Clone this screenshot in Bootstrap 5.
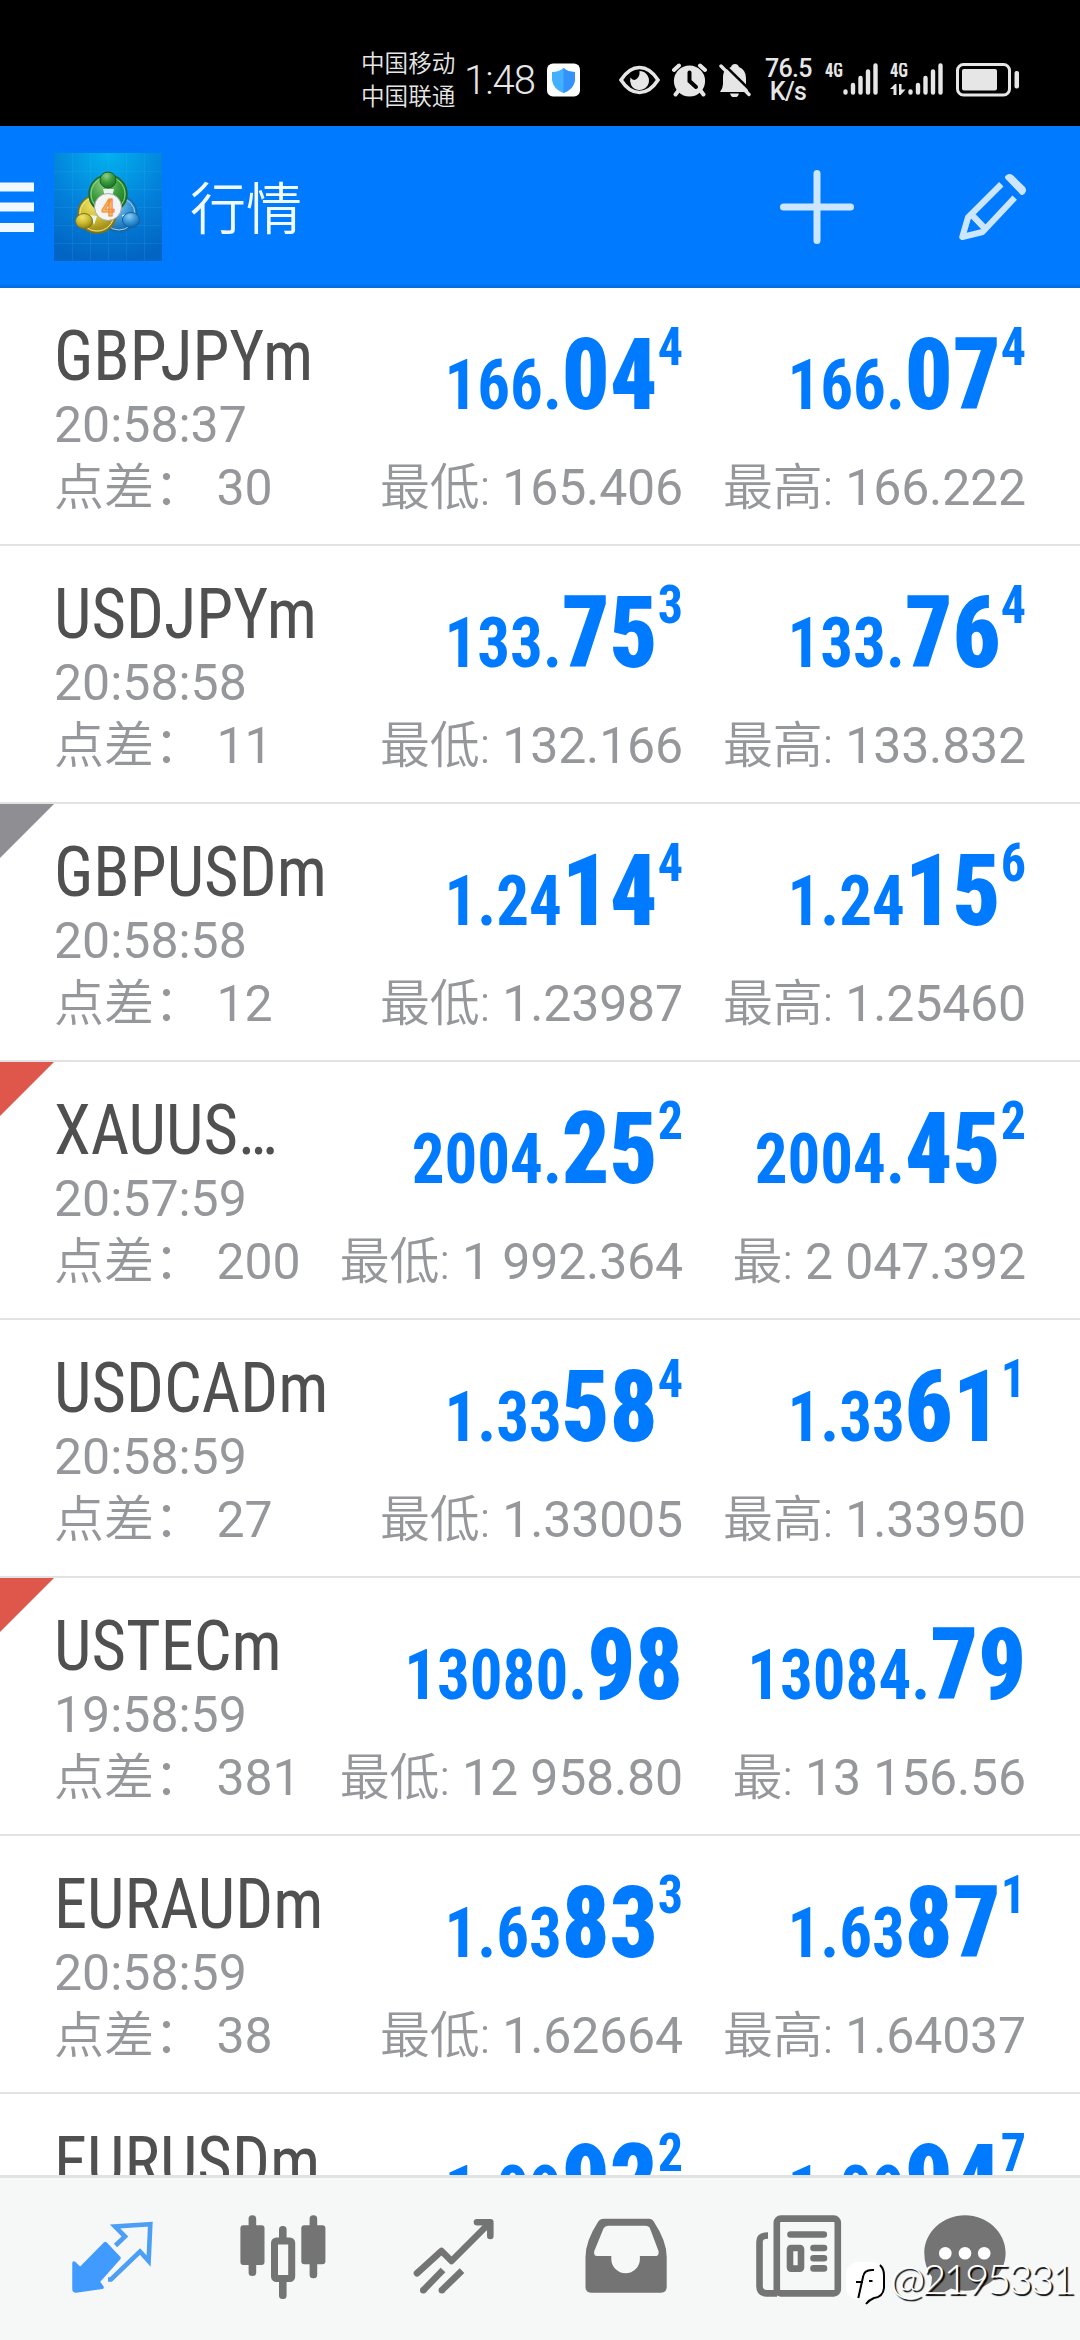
<!DOCTYPE html>
<html lang="zh-CN">
<head>
<meta charset="utf-8">
<meta name="viewport" content="width=device-width, initial-scale=1">
<title>行情</title>
<link href="https://cdn.jsdelivr.net/npm/bootstrap@5.3.0/dist/css/bootstrap.min.css" rel="stylesheet">
<style>
body{width:1080px;height:2340px;overflow:hidden;background:#fff;font-family:Roboto,"Noto Sans CJK SC",sans-serif;color:#96979b}
svg{display:block;flex:none}
.statusbar{height:126px;background:#000;color:#e6e6e6;padding:34px 0 0 361px}
.carrier{font:350 23.6px/33px "Noto Sans CJK SC",sans-serif;white-space:nowrap;width:103px;padding-top:12px}
.clock{font-size:40px;font-weight:300;letter-spacing:-1px;width:83px;line-height:80px;padding-top:7px}
.statusicons{height:91px}
.speed{font-size:25px;line-height:23px;width:46px;letter-spacing:-.7px;margin:0 14px;font-weight:500}
.gap-a{margin-left:39px}.gap-b{margin-left:12px}.gap-c{margin-left:13px}
.appbar{height:162px;background:#007aff;border-bottom:3px solid #0070e4;color:#f0f9ff;padding-top:3px}
.applogo{margin:0 28px 0 20px}
.apptitle{font:350 56px/1 "Noto Sans CJK SC",sans-serif;padding-bottom:5px}
.plus{margin-right:104px}.pencil{margin-right:53px}
.quotes{height:1887px;overflow:hidden}
.quote{position:relative;height:258px;border-bottom:2px solid #e1e2e4;padding:28px 0 0 54px;display:grid;grid-template-columns:276px 353px 343px;grid-template-rows:138px 68px;white-space:nowrap}
.sym{font-family:"Roboto Condensed",Roboto,sans-serif;font-stretch:condensed;font-size:70px;line-height:80px;color:#505050;transform:scaleX(.952);transform-origin:left}
.info{font-size:50px;line-height:58px}
.info.low{line-height:68px}
.info.text-end{letter-spacing:-.15px}
.info span{font-weight:350}
.price{font-family:"Roboto Condensed",Roboto,sans-serif;font-stretch:condensed;font-weight:700;font-size:70px;line-height:138px;color:#007aff;transform:scaleX(.928);transform-origin:right}
.price b{font-size:101px;line-height:0}
.price i{font-style:normal;font-size:54px;line-height:0;vertical-align:44px}
.flag{position:absolute;left:0;top:0;width:54px;height:54px;clip-path:polygon(0 0,100% 0,0 100%)}
.flag-gray{background:#8e8e93}.flag-red{background:#df574a}
.tabs{position:relative;height:165px;background:#f6f7f7;border-top:3px solid #e1e2e4;padding:29px 26px 0;color:#747474}
.stamp{position:absolute;left:846px;top:84px}
.stamp span{font:300 42px/42px Lato,sans-serif;color:#fff;text-shadow:2px 2px 1px #000;letter-spacing:-2.8px;margin:-11px 0 0 4px}
</style>
</head>
<body>
<header>
<div class="statusbar d-flex">
  <div class="carrier">中国移动<br>中国联通</div>
  <div class="clock">1:48</div>
  <div class="statusicons d-flex align-items-center">
    <svg width="33" height="34"><rect width="33" height="33" y=".5" rx="6" fill="#fff"/><path d="M16.500 5C20 8 24 9 28 9V17Q27 26 16.500 30Q6 26 5 17V9Q12 9 16.500 5Z" fill="#43b0ff"/><path d="M16.500 5C20 8 24 9 28 9V17Q27 26 16.500 30Z" fill="#3393fb"/></svg>
    <svg class="gap-a" width="41" height="34" fill="none" stroke="#e6e6e6" stroke-width="3.600"><path d="M2 17Q10 4.500 20.500 4.500T39 17Q31 29.500 20.500 29.500T2 17Z"/><path d="M20.500 8a9.500 9.500 0 1 1-9 6.500q2.500 4 6 1.500t3-8z" fill="#e6e6e6" stroke="none"/></svg>
    <svg class="gap-b" width="35" height="34"><g fill="none" stroke="#e6e6e6" stroke-width="4" stroke-linecap="round"><path d="M2 7L7 2.500M28 2.500L33 7M7 27L3.500 31.500M28 27L31.500 31.500"/></g><circle cx="17.500" cy="18" r="15.600" fill="#e6e6e6"/><path d="M17.500 9.500V18L24 24" stroke="#000" stroke-width="4" stroke-linecap="round" fill="none"/></svg>
    <svg class="gap-b" width="32" height="34"><path d="M16 1q3 0 4 3q7 3 7 11v7l2 5v2H1q3-4 3-8v-7q0-6 4-8q2-1 4-2q1-3 4-3zM11 30.500h9q-1 4-4.500 4t-4.500-4z" fill="#e6e6e6"/><path d="M3 -.5L33 29" stroke="#000" stroke-width="2.500"/><path d="M2 3L30 31.500" stroke="#e6e6e6" stroke-width="3.400" stroke-linecap="round"/></svg>
    <div class="speed text-center">76.5<br>K/s</div>
    <svg width="53" height="34" fill="#e6e6e6"><text x="0" y="14" font-family="Roboto Condensed,Roboto,sans-serif" font-size="20" font-weight="700" textLength="18" lengthAdjust="spacingAndGlyphs">4G</text><g stroke="#e6e6e6" stroke-width="4.400" stroke-linecap="round"><path d="M20.500 28.500v1M28 22v7.500M35.500 15v14.500M43 8.500v21M50.500 2.500v27"/></g></svg>
    <svg class="gap-b" width="53" height="34" fill="#e6e6e6"><text x="0" y="14" font-family="Roboto Condensed,Roboto,sans-serif" font-size="20" font-weight="700" textLength="18" lengthAdjust="spacingAndGlyphs">4G</text><path d="M0 26l5-5h1.500v11H3.500v-6zM9 21h2.500v5.500h4L10.500 32H9z"/><g stroke="#e6e6e6" stroke-width="4.400" stroke-linecap="round"><path d="M20.500 28.500v1M28 22v7.500M35.500 15v14.500M43 8.500v21M50.500 2.500v27"/></g></svg>
    <svg class="gap-c" width="64" height="34" fill="#e6e6e6"><rect x="1.500" y="1.500" width="52" height="30.500" rx="6" fill="none" stroke="#e6e6e6" stroke-width="3"/><rect x="6" y="6" width="35" height="21.500" rx="2"/><rect x="58.500" y="8" width="4.500" height="17.500" rx="2"/></svg>
  </div>
</div>
<div class="appbar d-flex align-items-center">
  <svg width="34" height="52" fill="#f0f9ff"><path d="M0 1.500h34v9H0zM0 21.500h34v9H0zM0 42h34v9H0z"/></svg>
  <svg class="applogo" width="108" height="108" viewBox="0 0 108 108">
    <defs>
      <radialGradient id="sky" cx=".5" cy="0" r="1"><stop offset="0" stop-color="#02b2ee"/><stop offset=".55" stop-color="#0381da"/><stop offset="1" stop-color="#0265c4"/></radialGradient>
      <radialGradient id="gr" cx=".4" cy=".25" r=".8"><stop offset="0" stop-color="#8fcf84"/><stop offset=".5" stop-color="#3a9b3d"/><stop offset="1" stop-color="#14701f"/></radialGradient>
      <radialGradient id="ye" cx=".4" cy=".25" r=".8"><stop offset="0" stop-color="#f0e56c"/><stop offset=".5" stop-color="#cdbb2f"/><stop offset="1" stop-color="#8c7a10"/></radialGradient>
      <radialGradient id="bl" cx=".4" cy=".25" r=".8"><stop offset="0" stop-color="#8accf2"/><stop offset=".5" stop-color="#3a97d6"/><stop offset="1" stop-color="#0b5ea6"/></radialGradient>
    </defs>
    <rect width="108" height="108" fill="url(#sky)"/>
    <path d="M18.500 0v108M36.500 0v108M54.500 0v108M72.500 0v108M90.500 0v108M0 18.500h108M0 36.500h108M0 54.500h108M0 72.500h108M0 90.500h108" stroke="#4cb4f0" stroke-opacity=".16"/>
    <circle cx="65" cy="61" r="18" fill="url(#bl)" stroke="#1a69a8" stroke-width="1.500"/><circle cx="65" cy="61" r="16" fill="none" stroke="#9ad4f5"/>
    <circle cx="43" cy="61" r="19" fill="url(#ye)" stroke="#7d7218" stroke-width="1.500"/><circle cx="43" cy="61" r="17" fill="none" stroke="#f5ec90"/>
    <circle cx="54" cy="41" r="19" fill="url(#gr)" stroke="#1d6a2a" stroke-width="1.500"/><circle cx="54" cy="41" r="17" fill="none" stroke="#9bdc92"/>
    <path d="M49 36h11l-2 8h-7zM36 62l7 1-3 9zM74 61l-6 1 3 9z" fill="#e9f5ef"/>
    <circle cx="54" cy="27" r="8" fill="url(#gr)" stroke="#17622a"/><ellipse cx="30" cy="68" rx="8.500" ry="7.500" fill="url(#ye)" stroke="#7d7218"/><ellipse cx="77" cy="67" rx="8.500" ry="7.500" fill="url(#bl)" stroke="#12609f"/>
    <circle cx="54" cy="54" r="13.500" fill="#f4f4f4" stroke="#a8a8a8"/>
    <text x="54" y="62.500" text-anchor="middle" font-family="Roboto,sans-serif" font-weight="700" font-size="23" fill="#ffb870" stroke="#f08a35">4</text>
  </svg>
  <div class="apptitle me-auto">行情</div>
  <svg class="plus" width="76" height="76" stroke="#cce6ff" stroke-width="7" stroke-linecap="round"><path d="M38 4.500v67M4.500 38h67"/></svg>
  <svg class="pencil" width="68" height="68" fill="none" stroke="#cce6ff" stroke-width="6.200" stroke-linejoin="round"><path d="M42.300 11.300L9 44.500L3.300 64L23.500 59L55.700 24.700M13 42L25.500 55"/><path d="M48 4.300q2-2.500 4.500-.5L64 15q2 2 0 4.500L63 20z" fill="#cce6ff" stroke-width="4"/></svg>
</div>
</header>
<main class="quotes">
  <div class="quote"><div><div class="sym">GBPJPYm</div><div class="info">20:58:37</div></div><div class="price text-end">166.<b>04</b><i>4</i></div><div class="price text-end">166.<b>07</b><i>4</i></div><div class="info low"><span>点差：</span> 30</div><div class="info low text-end"><span>最低:</span> 165.406</div><div class="info low text-end"><span>最高:</span> 166.222</div></div>
  <div class="quote"><div><div class="sym">USDJPYm</div><div class="info">20:58:58</div></div><div class="price text-end">133.<b>75</b><i>3</i></div><div class="price text-end">133.<b>76</b><i>4</i></div><div class="info low"><span>点差：</span> 11</div><div class="info low text-end"><span>最低:</span> 132.166</div><div class="info low text-end"><span>最高:</span> 133.832</div></div>
  <div class="quote"><div><div class="flag flag-gray"></div><div class="sym">GBPUSDm</div><div class="info">20:58:58</div></div><div class="price text-end">1.24<b>14</b><i>4</i></div><div class="price text-end">1.24<b>15</b><i>6</i></div><div class="info low"><span>点差：</span> 12</div><div class="info low text-end"><span>最低:</span> 1.23987</div><div class="info low text-end"><span>最高:</span> 1.25460</div></div>
  <div class="quote"><div><div class="flag flag-red"></div><div class="sym">XAUUS…</div><div class="info">20:57:59</div></div><div class="price text-end">2004.<b>25</b><i>2</i></div><div class="price text-end">2004.<b>45</b><i>2</i></div><div class="info low"><span>点差：</span> 200</div><div class="info low text-end"><span>最低:</span> 1 992.364</div><div class="info low text-end"><span>最:</span> 2 047.392</div></div>
  <div class="quote"><div><div class="sym">USDCADm</div><div class="info">20:58:59</div></div><div class="price text-end">1.33<b>58</b><i>4</i></div><div class="price text-end">1.33<b>61</b><i>1</i></div><div class="info low"><span>点差：</span> 27</div><div class="info low text-end"><span>最低:</span> 1.33005</div><div class="info low text-end"><span>最高:</span> 1.33950</div></div>
  <div class="quote"><div><div class="flag flag-red"></div><div class="sym">USTECm</div><div class="info">19:58:59</div></div><div class="price text-end">13080.<b>98</b></div><div class="price text-end">13084.<b>79</b></div><div class="info low"><span>点差：</span> 381</div><div class="info low text-end"><span>最低:</span> 12 958.80</div><div class="info low text-end"><span>最:</span> 13 156.56</div></div>
  <div class="quote"><div><div class="sym">EURAUDm</div><div class="info">20:58:59</div></div><div class="price text-end">1.63<b>83</b><i>3</i></div><div class="price text-end">1.63<b>87</b><i>1</i></div><div class="info low"><span>点差：</span> 38</div><div class="info low text-end"><span>最低:</span> 1.62664</div><div class="info low text-end"><span>最高:</span> 1.64037</div></div>
  <div class="quote"><div><div class="sym">EURUSDm</div></div><div class="price text-end">1.09<b>92</b><i>2</i></div><div class="price text-end">1.09<b>94</b><i>7</i></div></div>
</main>
<nav class="tabs d-flex">
  <div class="flex-fill d-flex justify-content-center"><svg width="90" height="100"><path d="M38.300 36.500L52 51L31.100 74.700L35 80.300L9 84Q7 84 7 82V56L13.200 62Z" fill="#419bff" stroke="#419bff" stroke-width="3.500" stroke-linejoin="round"/><path d="M48.500 38.500L58 29.500L48 19.500L83.300 17.200L81.600 54L73 44.500L44 72.500H41" fill="none" stroke="#4c9ff5" stroke-width="4.600"/></svg></div>
  <div class="flex-fill d-flex justify-content-center"><svg width="90" height="100" fill="currentColor"><rect x="2.400" y="18.300" width="24.100" height="39.700" rx="3"/><rect x="10.600" y="8.300" width="7.600" height="60.700" rx="3.500"/><rect x="63.300" y="18.300" width="24.100" height="39" rx="3"/><rect x="71.600" y="8.300" width="7.600" height="63" rx="3.500"/><rect x="41" y="19" width="7.600" height="73" rx="3.500"/><rect x="36.500" y="34" width="17.200" height="37.500" rx="2" fill="#f6f7f7" stroke="currentColor" stroke-width="7"/></svg></div>
  <div class="flex-fill d-flex justify-content-center"><svg width="90" height="100" fill="none" stroke="currentColor" stroke-width="6.600"><path d="M8 66.300L32.500 44L42.500 54L81 15.500M68 15.300H81.300V29" stroke-linecap="round" stroke-linejoin="round"/><path d="M14.800 82.700L34 63M33.400 82.700L53 63.700"/><g fill="currentColor" stroke="none"><circle cx="14.300" cy="83.200" r="3.300"/><circle cx="32.900" cy="83.200" r="3.300"/></g></svg></div>
  <div class="flex-fill d-flex justify-content-center"><svg width="90" height="100" fill="currentColor"><path fill-rule="evenodd" d="M23 11.700H68Q71 11.700 73 15Q85.700 34 85.700 50V80Q85.700 85.700 80 85.700H10Q4.500 85.700 4.500 80V50Q4.500 34 17 15Q19 11.700 23 11.700ZM27 18.700Q24 18.700 22.500 21.500L13.300 44Q12.500 49 16 49H30.300V52A14.300 14.300 0 0 0 58.900 52V49H74Q78.500 49 77.500 44L69 21.500Q68 18.700 64 18.700Z"/></svg></div>
  <div class="flex-fill d-flex justify-content-center"><svg width="90" height="100" fill="none" stroke="currentColor" stroke-width="6.600"><rect x="24.800" y="11.600" width="61" height="74.800" rx="4"/><path d="M16 28.500Q7.500 28.500 7.500 35V79Q7.500 86.400 15 86.400H25"/><path d="M38.500 27.500H71.800M61.500 41H72M61.500 51.300H72M61.500 61.400H72" stroke-linecap="round"/><rect x="38" y="41" width="11" height="20.600" rx="1"/></svg></div>
  <div class="flex-fill d-flex justify-content-center"><svg width="90" height="100" fill="currentColor"><path d="M42 8.300C64 8.300 82.600 25 82.600 46S64 83.700 42 83.700Q34 83.700 28 81.500Q16 89 2 89Q9 82 9 70Q1.300 60 1.300 46C1.300 25 20 8.300 42 8.300Z"/><g fill="#fff"><circle cx="22.300" cy="46.300" r="6.300"/><circle cx="42" cy="46.300" r="6.300"/><circle cx="61.200" cy="46.300" r="6.300"/></g></svg></div>
  <div class="stamp d-flex align-items-center"><svg width="40" height="43" fill="none" stroke="#000" stroke-width="2"><rect width="37.500" height="37.500" rx="12" fill="#fff" stroke="none"/><path d="M28 8Q18 7 17 15L12.300 36M10 20h7M23 19h3.500M34 3Q38 7 38 13V26Q37 35 28 36Q23 38 20 42"/></svg><span>@2195331</span></div>
</nav>
<script src="https://cdn.jsdelivr.net/npm/bootstrap@5.3.0/dist/js/bootstrap.bundle.min.js"></script>
</body>
</html>
